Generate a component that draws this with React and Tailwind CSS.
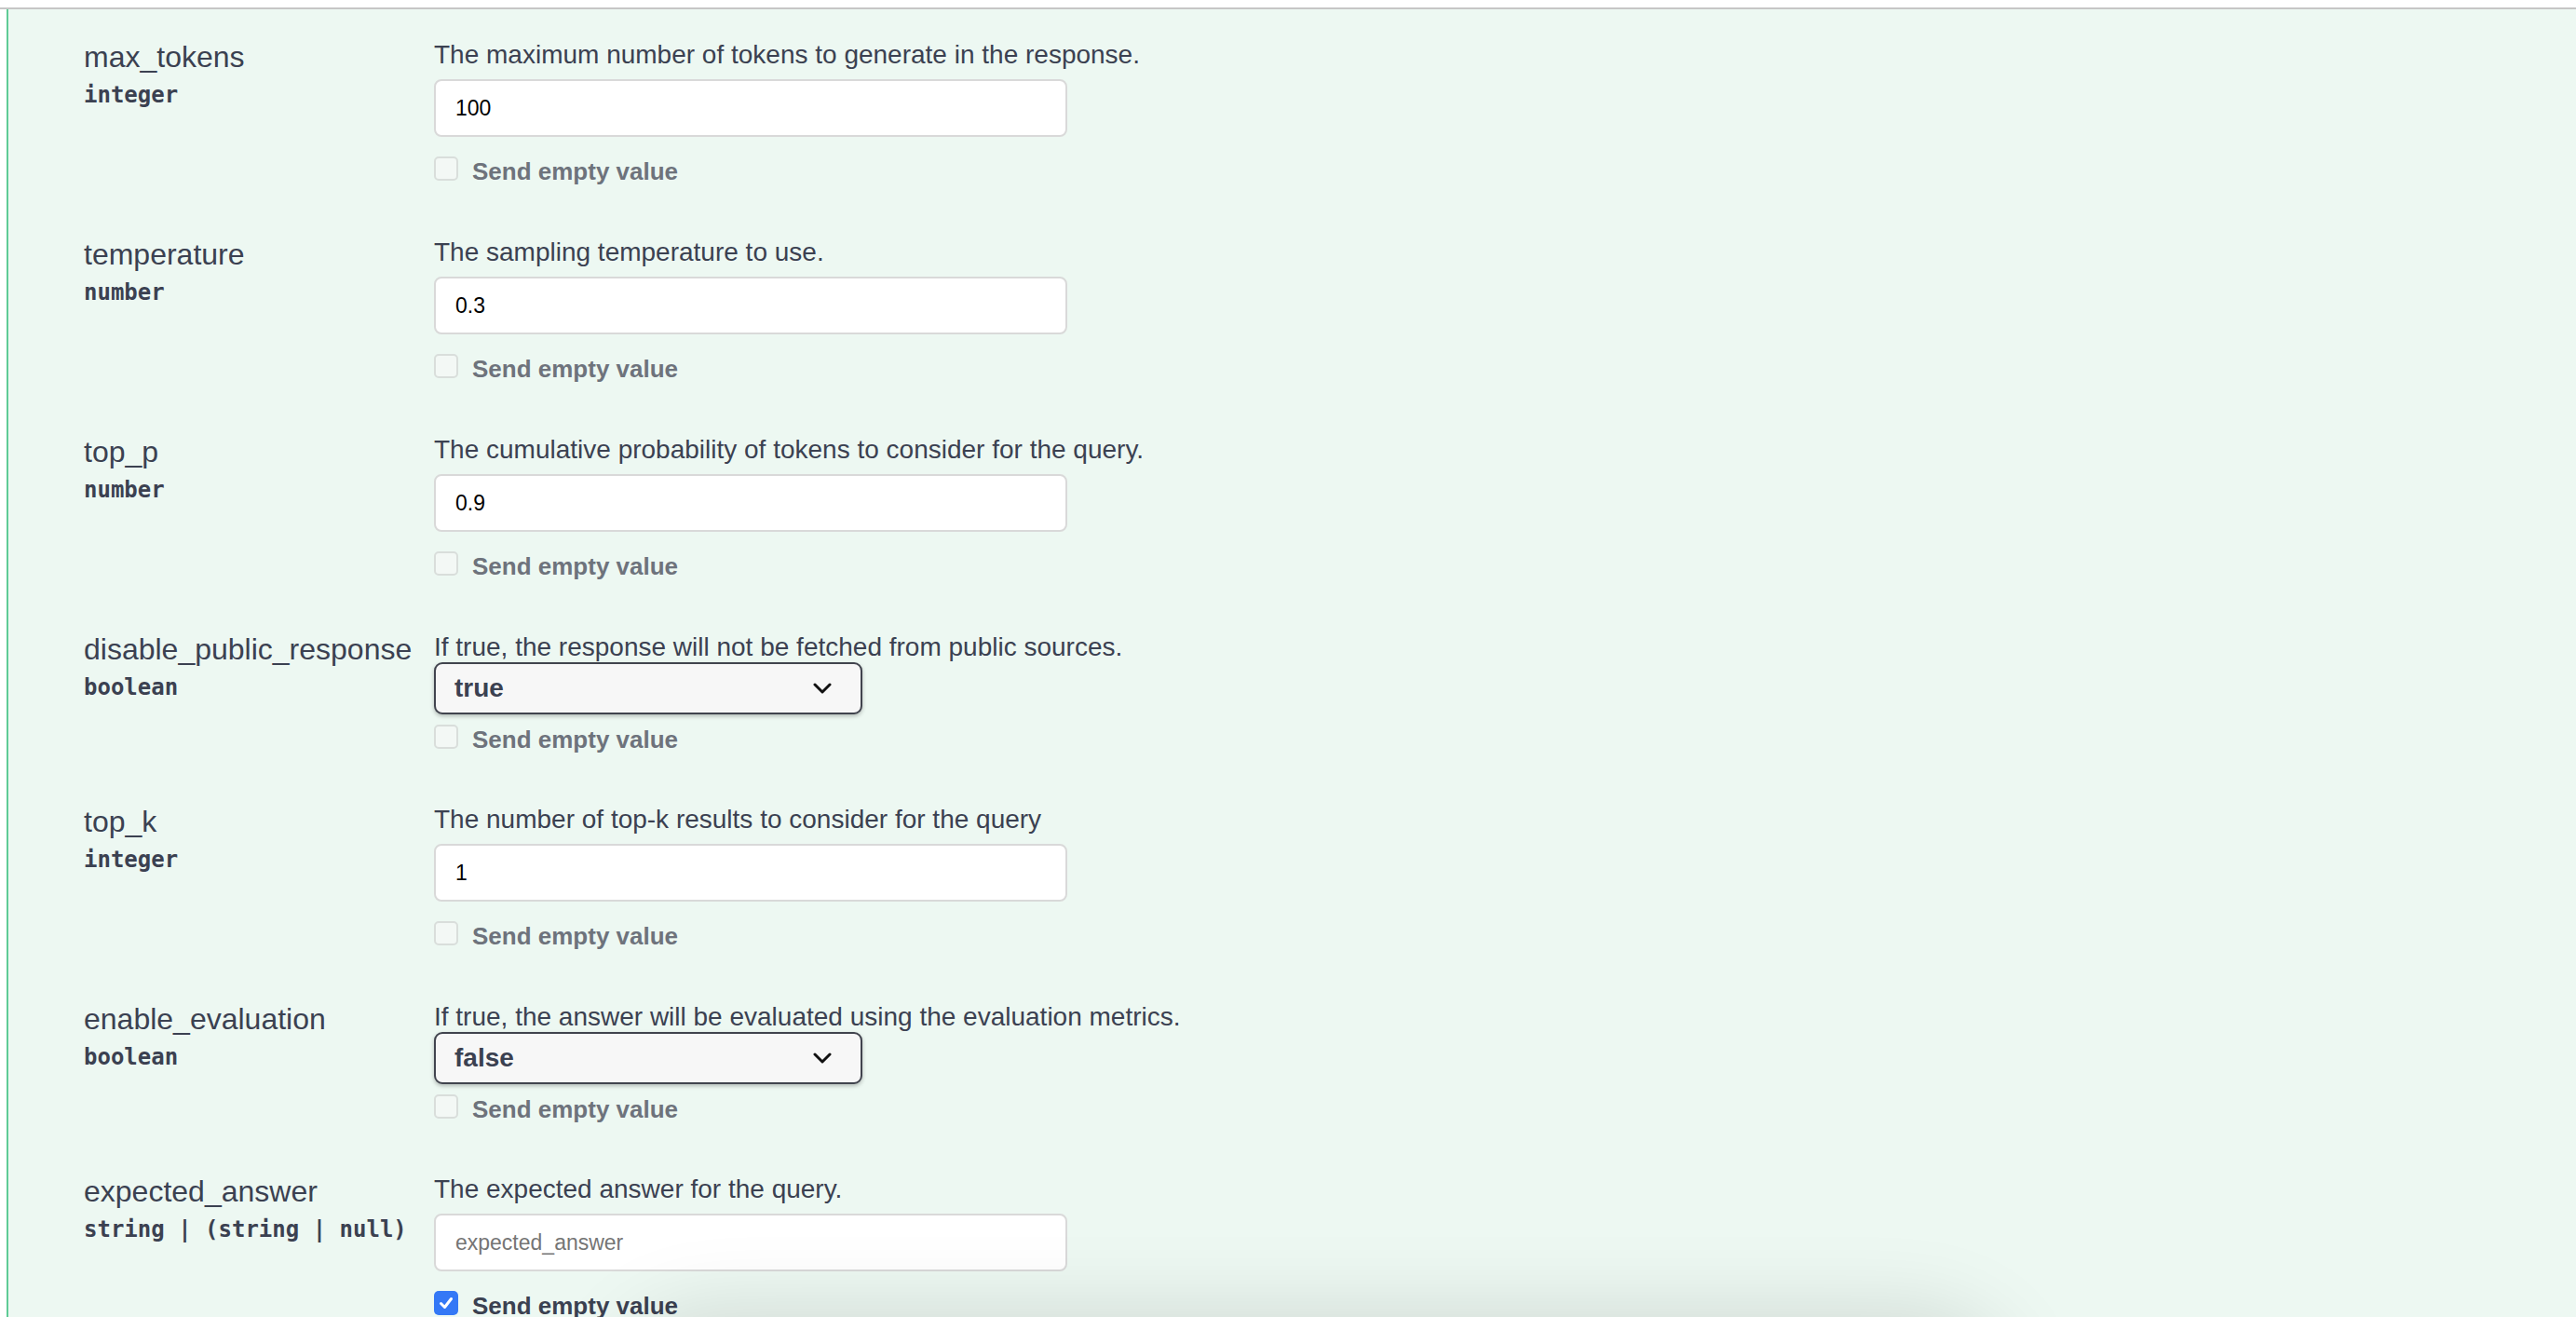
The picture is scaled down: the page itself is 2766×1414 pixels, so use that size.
import React from "react";

const rows = [
  { name: "max_tokens", type: "integer", desc: "The maximum number of tokens to generate in the response.", kind: "input", value: "100" },
  { name: "temperature", type: "number", desc: "The sampling temperature to use.", kind: "input", value: "0.3" },
  { name: "top_p", type: "number", desc: "The cumulative probability of tokens to consider for the query.", kind: "input", value: "0.9" },
  { name: "disable_public_response", type: "boolean", desc: "If true, the response will not be fetched from public sources.", kind: "select", value: "true" },
  { name: "top_k", type: "integer", desc: "The number of top-k results to consider for the query", kind: "input", value: "1" },
  { name: "enable_evaluation", type: "boolean", desc: "If true, the answer will be evaluated using the evaluation metrics.", kind: "select", value: "false" },
  { name: "expected_answer", type: "string | (string | null)", desc: "The expected answer for the query.", kind: "input", value: "", placeholder: "expected_answer", checked: true },
];

function Checkbox({ checked }) {
  if (checked) {
    return (
      <div className="w-[26px] h-[26px] rounded-[5px] bg-[#3478f6] flex items-center justify-center shrink-0">
        <svg width="18" height="18" viewBox="0 0 18 18">
          <path d="M3.5 9.5 L7.5 13.5 L14.5 4.5" fill="none" stroke="white" strokeWidth="3" strokeLinecap="round" strokeLinejoin="round" />
        </svg>
      </div>
    );
  }
  return <div className="w-[26px] h-[26px] rounded-[5px] border-2 border-[#d9dedb] bg-[#f3f8f5] shrink-0" />;
}

function Row({ r }) {
  const isSelect = r.kind === "select";
  return (
    <div className={`flex ${isSelect ? "pb-[56px]" : "pb-[57px]"}`}>
      <div className="w-[376px] shrink-0">
        <div className="text-[32px] leading-[36px] text-[#3b4151] whitespace-nowrap">{r.name}</div>
        <div className="mt-[9px] text-[24px] leading-[28px] font-bold text-[#3b4151] whitespace-nowrap font-['DejaVu_Sans_Mono',monospace]">
          {r.type}
        </div>
      </div>
      <div className="flex flex-col">
        <div className="text-[28px] leading-[32px] text-[#3b4151] whitespace-nowrap">{r.desc}</div>
        {isSelect ? (
          <div className="w-[460px] h-[56px] rounded-[9px] border-2 border-[#41444e] bg-[#f7f7f7] shadow-[0_2px_4px_rgba(0,0,0,0.25)] flex items-center justify-between pl-[20px] pr-[31px]">
            <span className="text-[28px] font-bold text-[#3b4151]">{r.value}</span>
            <svg width="20" height="12" viewBox="0 0 20 12">
              <path d="M2 2 L10 10 L18 2" fill="none" stroke="#111" strokeWidth="3" strokeLinecap="round" strokeLinejoin="round" />
            </svg>
          </div>
        ) : (
          <input
            readOnly
            defaultValue={r.value}
            placeholder={r.placeholder}
            className="mt-[10px] w-[680px] h-[62px] rounded-[8px] border-2 border-[#d9d9d9] bg-white px-[21px] text-[23px] text-black placeholder:text-[#757575] outline-none font-['Liberation_Sans',Arial,sans-serif]"
          />
        )}
        <div className={`flex items-start gap-[15px] h-[30px] ${isSelect ? "mt-[11px]" : "mt-[21px]"}`}>
          <Checkbox checked={r.checked} />
          <span className={`mt-[2px] text-[26px] leading-[28px] font-bold whitespace-nowrap ${r.checked ? "text-[#3b4151]" : "text-[#6e737c]"}`}>
            Send empty value
          </span>
        </div>
      </div>
    </div>
  );
}

export default function App() {
  return (
    <div className="relative w-[2766px] h-[1414px] overflow-hidden bg-white font-['Liberation_Sans',Arial,sans-serif]">
      <div className="pt-[8px]">
        <div className="h-[2px] bg-[#c6c6c6]" />
        <div className="ml-[7px] border-l-2 border-[#5fcb96] bg-[#edf8f2] min-h-[1404px] pl-[81px] pt-[33px]">
          {rows.map((r) => (
            <Row key={r.name} r={r} />
          ))}
        </div>
      </div>
      <div className="absolute left-[700px] top-[1450px] w-[1420px] h-[200px] rounded-[60px] bg-[#d5ddd8] shadow-[0_0_90px_40px_rgba(0,0,0,0.13)]" />
    </div>
  );
}
